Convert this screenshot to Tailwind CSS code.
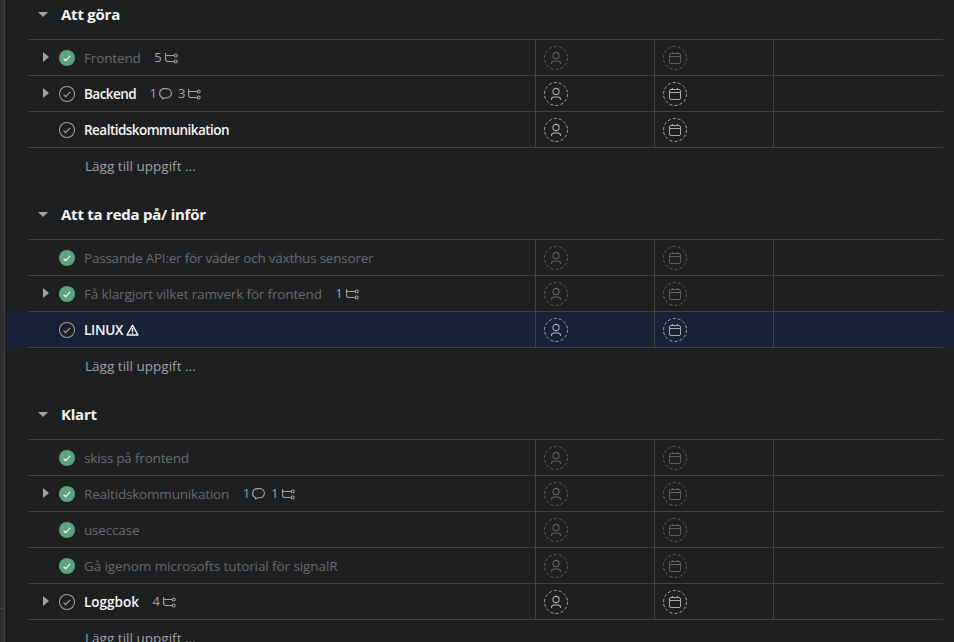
<!DOCTYPE html>
<html lang="sv">
<head>
<meta charset="utf-8">
<title>Uppgifter</title>
<script src="https://cdn.jsdelivr.net/npm/@tailwindcss/browser@4"></script>
</head>
<body class="h-[642px] w-[954px] overflow-hidden bg-[#1e1f21] font-['Open_Sans','Noto_Sans',sans-serif] text-[#f5f4f3]">
<svg class="hidden">
  <symbol id="check" viewBox="0 0 16 16"><path d="M4.6 8.600l2 2 4.600-4.700" fill="none" stroke="currentColor" stroke-width="1.1"/></symbol>
  <symbol id="sub" viewBox="0 0 13 11"><g fill="none" stroke="currentColor" stroke-width="1.1"><path d="M.6 0v6.500a2 2 0 0 0 2 2H9M.6 2.500H9"/><circle cx="10.700" cy="2.500" r="1.500"/><circle cx="10.700" cy="8.500" r="1.500"/></g></symbol>
  <symbol id="bubble" viewBox="0 0 13 12"><path d="M3.500 11V9.600A4.700 4.700 0 0 1 5.200.6h2.600a4.600 4.600 0 0 1 0 9.200H6.200z" fill="none" stroke="currentColor" stroke-width="1.1" stroke-linejoin="round"/></symbol>
  <symbol id="person" viewBox="0 0 24 24"><g fill="none" stroke="currentColor"><circle cx="12" cy="12" r="11.500" stroke-dasharray="3 2.160"/><g stroke-width="1.1"><circle cx="12" cy="9.500" r="3.100"/><path d="M7.500 18v-.500a2.500 2.500 0 0 1 2.500-2.500h4a2.500 2.500 0 0 1 2.500 2.500v.500"/></g></g></symbol>
  <symbol id="cal" viewBox="0 0 24 24"><g fill="none" stroke="currentColor"><circle cx="12" cy="12" r="11.500" stroke-dasharray="3 2.160"/><rect x="6.500" y="7.500" width="11" height="10" rx="1.500"/><path d="M6.500 10.500h11M9.500 6v2M14.500 6v2"/></g></symbol>
  <symbol id="warn" viewBox="0 0 13 12"><path d="M6.500 1.200L12 11H1zM6.500 4v4M6.500 8.800v1.200" fill="none" stroke="currentColor" stroke-width="1.400" stroke-linejoin="round"/></symbol>
</svg>
<div class="flex h-full">
  <aside class="flex w-[5px] shrink-0 flex-col border-r border-[#424244] bg-[#2e2e30]"><div class="h-[609px] border-b border-[#424244]"></div></aside>
  <main id="list" class="-mt-2.5 flex min-w-0 grow flex-col gap-1.5"></main>
</div>
<script>
// ls is the letter spacing of a label in pixels
const sections = [
  ['Att göra', [
    {t:'Frontend', ls:-.15, done:1, kids:1, subs:5},
    {t:'Backend', ls:-.55, kids:1, com:1, subs:3},
    {t:'Realtidskommunikation', ls:-.53}]],
  ['Att ta reda på/ inför', [
    {t:'Passande API:er för väder och växthus sensorer', ls:-.22, done:1},
    {t:'Få klargjort vilket ramverk för frontend', ls:-.15, done:1, kids:1, subs:1},
    {t:'LINUX', ls:-.25, warn:1, sel:1}]],
  ['Klart', [
    {t:'skiss på frontend', ls:-.18, done:1},
    {t:'Realtidskommunikation', ls:-.19, done:1, kids:1, com:1, subs:1},
    {t:'useccase', ls:-.18, done:1},
    {t:'Gå igenom microsofts tutorial för signalR', ls:-.09, done:1},
    {t:'Loggbok', ls:0, kids:1, subs:4}]]
];
const cell = (r, icon) => `<div class="flex w-[119px] shrink-0 items-center border-l border-[#424244] pl-2 ${r.done ? 'text-[#606062]' : 'text-[#a9a7a8]'}"><svg class="size-6"><use href="#${icon}"/></svg></div>`;
const row = r => `
<div class="h-9 pl-6 pr-[11px] ${r.sel ? 'bg-[#182135]' : ''}"><div class="flex h-full border-b border-[#424244]">
  <div class="flex min-w-0 grow items-center">
    <div class="flex w-[30px] shrink-0 pl-3.5 pb-0.5">${r.kids ? '<svg class="h-2.5 w-1.5 fill-[#a2a0a2]"><path d="M0 0L6 5L0 10z"/></svg>' : ''}</div>
    <div class="size-4 shrink-0 rounded-full ${r.done ? 'bg-[#5da283] text-white' : 'bg-[#1e1f21] text-[#a9a7a8] shadow-[inset_0_0_0_1px_#a2a0a2]'}"><svg class="size-4"><use href="#check"/></svg></div>
    <span style="letter-spacing:${r.ls}px" class="ml-[9px] pt-px text-[13.5px] whitespace-nowrap ${r.done ? 'text-[#69696b]' : 'font-[560]'}">${r.t}</span>
    ${r.warn ? '<svg class="ml-[3px] h-3 w-[13px]"><use href="#warn"/></svg>' : ''}
    <div class="ml-[13.5px] flex items-center gap-1.5 pt-px text-[13px] text-[#a2a0a2]">
      ${r.com ? `<span class="flex items-center gap-0.5">${r.com}<svg class="h-3 w-[13px]"><use href="#bubble"/></svg></span>` : ''}
      ${r.subs ? `<span class="flex items-center gap-[3px]">${r.subs}<svg class="h-[11px] w-[13px]"><use href="#sub"/></svg></span>` : ''}
    </div>
  </div>
  ${cell(r,'person')}${cell(r,'cal')}
  <div class="w-[170px] shrink-0 border-l border-[#424244]"></div>
</div></div>`;
document.getElementById('list').innerHTML = sections.map(([title, rows]) => `
<section>
  <h2 class="flex h-[49px] items-center pl-[33px] text-[15px] font-bold tracking-[-0.24px]"><svg class="mr-[13px] h-[5px] w-2.5 fill-[#a2a0a2]"><path d="M0 0h10L5 5z"/></svg>${title}</h2>
  <div class="ml-6 mr-[11px] h-px bg-[#424244]"></div>
  ${rows.map(row).join('')}
  <div class="flex h-9 items-center pl-20 text-[13.5px] tracking-[0.02px] text-[#a2a0a2]">Lägg till uppgift ...</div>
</section>`).join('');
</script>
</body>
</html>
